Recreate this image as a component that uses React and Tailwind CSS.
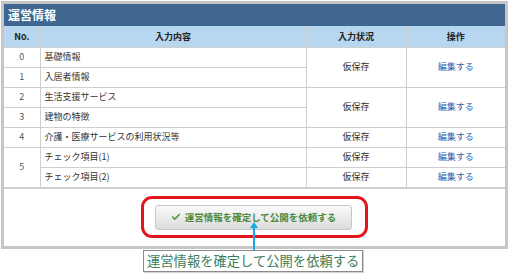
import { Check } from 'lucide-react'

const rows = [
  { no: '0', name: '基礎情報', noSpan: 1, status: '仮保存', statusSpan: 2 },
  { no: '1', name: '入居者情報', noSpan: 1 },
  { no: '2', name: '生活支援サービス', noSpan: 1, status: '仮保存', statusSpan: 2 },
  { no: '3', name: '建物の特徴', noSpan: 1 },
  { no: '4', name: '介護・医療サービスの利用状況等', noSpan: 1, status: '仮保存', statusSpan: 1 },
  { no: '5', name: 'チェック項目(1)', noSpan: 2, status: '仮保存', statusSpan: 1 },
  { name: 'チェック項目(2)', status: '仮保存', statusSpan: 1 },
]

export default function App() {
  return (
    <div className="relative w-[511px] h-[274px] bg-white font-['Noto_Sans_CJK_JP',sans-serif] text-[#333]">
      {/* panel */}
      <div className="ml-[1px] mt-[1px] w-[507px] border-[3px] border-[#c6c6c6]">
        <div className="h-[22px] bg-[#3f6791] pl-[4px] flex items-center text-white text-[12px] font-bold">
          運営情報
        </div>
        <table className="w-[501px] table-fixed border-collapse text-[9px]">
          <colgroup>
            <col className="w-[36px]" />
            <col className="w-[266px]" />
            <col className="w-[100px]" />
            <col className="w-[99px]" />
          </colgroup>
          <thead>
            <tr className="h-[21px] bg-[#b7d6f0] font-bold text-[#222]">
              <th className="border border-[#cfcfcf] border-t-0 border-l-0">No.</th>
              <th className="border border-[#cfcfcf] border-t-0">入力内容</th>
              <th className="border border-[#cfcfcf] border-t-0">入力状況</th>
              <th className="border border-[#cfcfcf] border-t-0 border-r-0">操作</th>
            </tr>
          </thead>
          <tbody>
            {rows.map((r, i) => (
              <tr key={i} className="h-[20px]">
                {r.no !== undefined && (
                  <td rowSpan={r.noSpan} className="border border-[#cfcfcf] border-l-0 text-center text-[#555]">
                    {r.no}
                  </td>
                )}
                <td className="border border-[#cfcfcf] pl-[4px]">{r.name}</td>
                {r.status && (
                  <td rowSpan={r.statusSpan} className="border border-[#cfcfcf] text-center">
                    {r.status}
                  </td>
                )}
                {r.status && (
                  <td rowSpan={r.statusSpan} className="border border-[#cfcfcf] border-r-0 text-center text-[#2c5fb3]">
                    編集する
                  </td>
                )}
              </tr>
            ))}
          </tbody>
        </table>
        <div className="flex justify-center pt-[16px] pb-[16px] border-t border-[#cfcfcf]">
          <button className="ml-[-2px] w-[197px] h-[25px] rounded-[3px] border border-[#c6c6c6] bg-gradient-to-b from-[#fafafa] to-[#dcdcdc] flex items-center justify-center gap-[4px] text-[9.5px] font-bold text-[#4b8a3c]">
            <Check size={10} strokeWidth={4} className="text-[#5a9a3e]" />
            運営情報を確定して公開を依頼する
          </button>
        </div>
      </div>

      {/* annotation: red outline */}
      <div className="absolute left-[141px] top-[195px] w-[227px] h-[42px] rounded-[11px] border-[3px] border-[#e3141c]" />

      {/* annotation: arrow */}
      <svg className="absolute left-[249px] top-[220px]" width="10" height="30" viewBox="0 0 10 30">
        <path d="M5 1 L1 7 L9 7 Z" fill="#19a8e2" />
        <line x1="5" y1="6" x2="5" y2="30" stroke="#19a8e2" strokeWidth="2" />
      </svg>

      {/* annotation: callout */}
      <div className="absolute left-[143px] top-[249px] h-[22px] px-[3px] border border-[#8a8a8a] bg-white flex items-center whitespace-nowrap text-[13.3px] leading-none text-[#3e7d5c] shadow-[1px_1px_0_#d0d0d0]">
        運営情報を確定して公開を依頼する
      </div>
    </div>
  )
}
